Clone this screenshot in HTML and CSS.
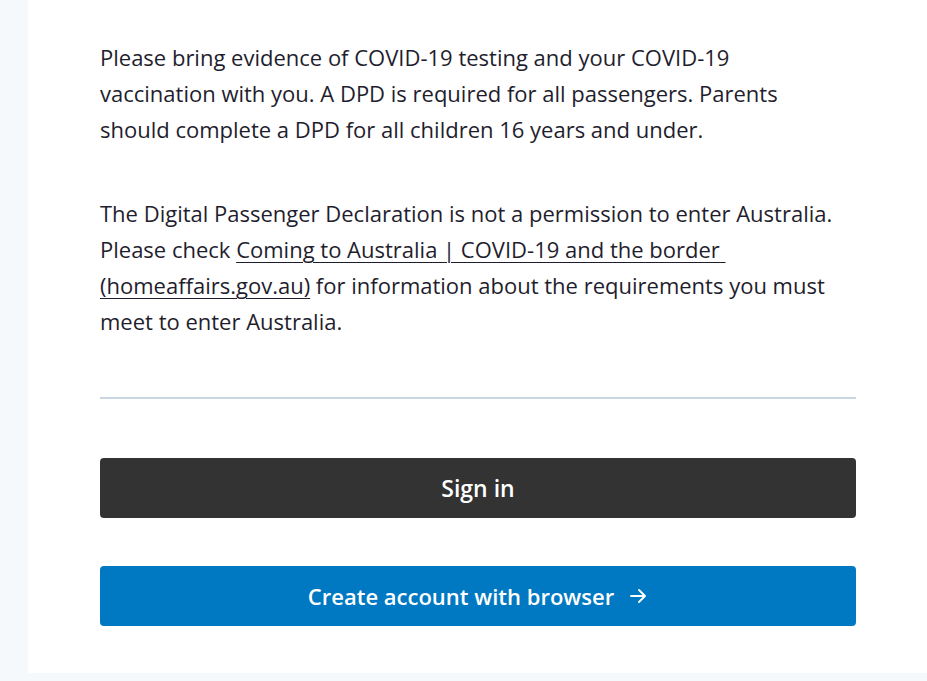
FILE: index.html
```html
<!DOCTYPE html>
<html lang="en">
<head>
<meta charset="utf-8">
<title>Digital Passenger Declaration</title>
<link rel="stylesheet" href="styles.css">
</head>
<body>
<div class="page">
  <main class="card">
    <p class="text">Please bring evidence of COVID-19 testing and your COVID-19<br>vaccination with you. A DPD is required for all passengers. Parents<br>should complete a DPD for all children 16 years and under.</p>
    <p class="text">The Digital Passenger Declaration is not a permission to enter Australia.<br>Please check <a class="link" href="#">Coming to Australia | COVID-19 and the border&nbsp;<br>(homeaffairs.gov.au)</a> for information about the requirements you must<br>meet to enter Australia.</p>
    <hr class="divider">
    <div class="actions">
      <button class="btn btn-dark">Sign in</button>
      <button class="btn btn-blue">Create account with browser <svg class="arrow" width="20" height="20" viewBox="0 0 20 20" aria-hidden="true"><path d="M3 10h14M11 4l6 6-6 6" fill="none" stroke="#fff" stroke-width="1.9" stroke-linecap="round" stroke-linejoin="round"/></svg></button>
    </div>
  </main>
</div>
</body>
</html>
```
FILE: styles.css
```css
html, body {
  margin: 0;
  padding: 0;
  background: #f5f9fc;
}
body {
  font-family: "Open Sans", "Noto Sans", sans-serif;
  color: #1f1e2e;
}
.page {
  padding-left: 28px;
  height: 681px;
  overflow: hidden;
}
.card {
  background: #ffffff;
  height: 673px;
  box-sizing: border-box;
  padding: 39px 0 0 72px;
  width: 928px;
}
.text {
  width: 800px;
  margin: 0 0 48px 0;
  font-size: 22px;
  line-height: 36px;
  white-space: nowrap;
}
.text:last-of-type {
  margin-bottom: 0;
}
.link {
  color: #1f1e2e;
  text-decoration: underline;
  text-decoration-thickness: 1px;
  text-underline-offset: 4px;
}
.divider {
  width: 756px;
  margin: 58px 0 0 0;
  border: 0;
  border-top: 2px solid #cad5e2;
  height: 0;
}
.actions {
  width: 756px;
  display: flex;
  flex-direction: column;
  gap: 48px;
  margin-top: 59px;
}
.btn {
  height: 60px;
  border: 0;
  border-radius: 4px;
  color: #ffffff;
  font-family: "Open Sans", "Noto Sans", sans-serif;
  font-weight: 600;
  font-size: 22px;
  display: flex;
  align-items: center;
  justify-content: center;
  gap: 14px;
  padding: 0;
}
.btn-dark {
  background: #333333;
  font-size: 23px;
}
.btn-blue {
  background: #0079c2;
}
.arrow {
  display: block;
}
```
